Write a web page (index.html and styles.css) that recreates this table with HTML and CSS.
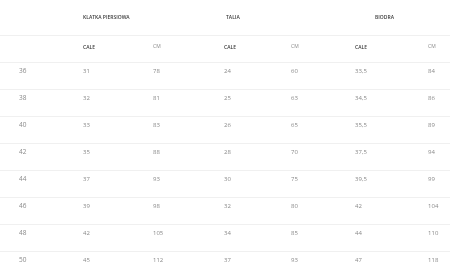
FILE: index.html
```html
<!DOCTYPE html>
<html lang="pl">
<head>
<meta charset="utf-8">
<title>Tabela rozmiarów</title>
<link rel="stylesheet" href="styles.css">
</head>
<body>
<table class="sizes">
  <colgroup>
    <col class="c-size">
    <col class="c-2">
    <col class="c-3">
    <col class="c-4">
    <col class="c-5">
    <col class="c-6">
    <col class="c-7">
  </colgroup>
  <thead>
    <tr class="group">
      <th></th>
      <th colspan="2">KLATKA PIERSIOWA</th>
      <th colspan="2" class="talia">TALIA</th>
      <th colspan="2" class="biodra">BIODRA</th>
    </tr>
    <tr class="unit">
      <th></th>
      <th class="cale">CALE</th>
      <th class="cm">CM</th>
      <th class="cale">CALE</th>
      <th class="cm">CM</th>
      <th class="cale">CALE</th>
      <th class="cm">CM</th>
    </tr>
  </thead>
  <tbody>
    <tr><td class="size">36</td><td>31</td><td>78</td><td>24</td><td>60</td><td>33,5</td><td>84</td></tr>
    <tr><td class="size">38</td><td>32</td><td>81</td><td>25</td><td>63</td><td>34,5</td><td>86</td></tr>
    <tr><td class="size">40</td><td>33</td><td>83</td><td>26</td><td>65</td><td>35,5</td><td>89</td></tr>
    <tr><td class="size">42</td><td>35</td><td>88</td><td>28</td><td>70</td><td>37,5</td><td>94</td></tr>
    <tr><td class="size">44</td><td>37</td><td>93</td><td>30</td><td>75</td><td>39,5</td><td>99</td></tr>
    <tr><td class="size">46</td><td>39</td><td>98</td><td>32</td><td>80</td><td>42</td><td>104</td></tr>
    <tr><td class="size">48</td><td>42</td><td>105</td><td>34</td><td>85</td><td>44</td><td>110</td></tr>
    <tr><td class="size">50</td><td>45</td><td>112</td><td>37</td><td>93</td><td>47</td><td>118</td></tr>
  </tbody>
</table>
</body>
</html>
```

FILE: styles.css
```css
html, body {
  margin: 0;
  padding: 0;
  background: #ffffff;
}

.sizes {
  border-collapse: collapse;
  table-layout: fixed;
  width: 450px;
  font-family: "Open Sans", "Liberation Sans", sans-serif;
  color: #8a8a8a;
  will-change: transform;
}

.c-size { width: 83px; }
.c-2 { width: 70px; }
.c-3 { width: 71px; }
.c-4 { width: 67px; }
.c-5 { width: 64px; }
.c-6 { width: 73px; }
.c-7 { width: 22px; }

.sizes th,
.sizes td {
  padding: 0;
  text-align: left;
  vertical-align: top;
  border-bottom: 1px solid #f0f0f0;
  white-space: nowrap;
  overflow: visible;
}

.group th {
  height: 35px;
  vertical-align: middle;
  font-size: 5px;
  font-weight: 600;
  color: #3a3a3a;
  line-height: 8px;
  padding-bottom: 1px;
  box-sizing: border-box;
}

.group .talia { padding-left: 2px; }
.group .biodra { padding-left: 20px; }

.unit th {
  height: 27px;
  font-size: 5px;
  line-height: 8px;
  padding-top: 6px;
  box-sizing: border-box;
}

.unit .cale {
  font-weight: 600;
  color: #3a3a3a;
  padding-top: 7px;
}

.unit .cm {
  font-weight: 400;
  color: #8a8a8a;
}

.sizes tbody td {
  height: 27px;
  box-sizing: border-box;
  font-size: 6px;
  line-height: 10px;
  padding-top: 3px;
}

.sizes tbody td.size {
  padding-left: 19px;
  font-size: 6.5px;
}
```
